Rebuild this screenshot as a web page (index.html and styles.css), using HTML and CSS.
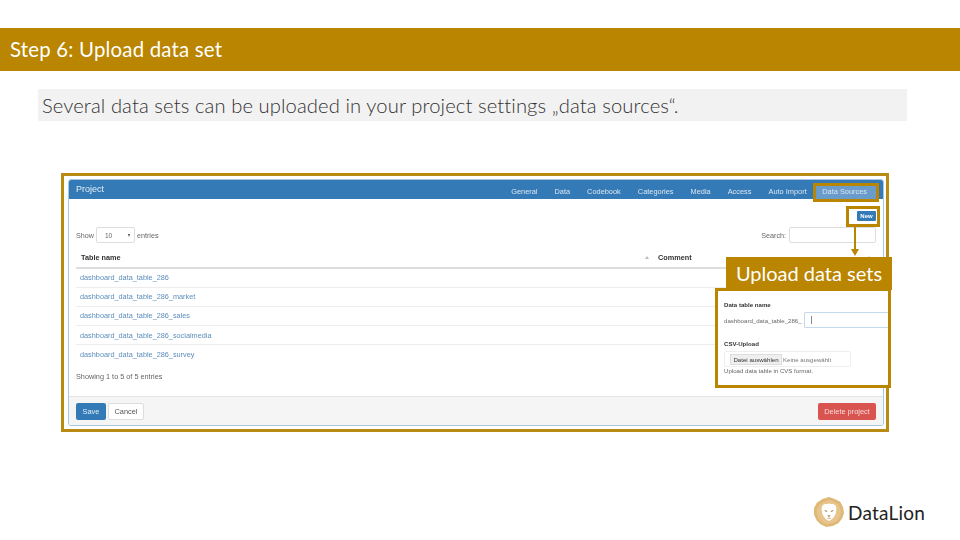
FILE: index.html
```html
<!DOCTYPE html>
<html lang="en">
<head>
    <meta charset="UTF-8">
    <title>Step 6: Upload data set</title>
    <link rel="stylesheet" href="styles.css">
</head>
<body>
<div class="slide">
    <div class="title-bar">Step 6: Upload data set</div>
    <div class="intro">Several data sets can be uploaded in your project settings „data sources“.</div>

    <div class="shot-frame">
        <div class="panel">
            <div class="panel-head">
                <span class="panel-title">Project</span>
                <div class="tabs">
                    <span class="tab">General</span>
                    <span class="tab">Data</span>
                    <span class="tab">Codebook</span>
                    <span class="tab">Categories</span>
                    <span class="tab">Media</span>
                    <span class="tab">Access</span>
                    <span class="tab">Auto Import</span>
                    <span class="tab active">Data Sources</span>
                </div>
            </div>
            <div class="panel-body">
                <div class="new-row"><span class="btn-new">New</span></div>
                <div class="controls">
                    <div class="show">
                        Show
                        <span class="select"><span>10</span><span class="select-arrow"></span></span>
                        entries
                    </div>
                    <div class="search">Search: <span class="search-box"></span></div>
                </div>
                <table class="data-table">
                    <thead>
                        <tr>
                            <th class="col-name"><div class="th-inner">Table name <span class="sort"></span></div></th>
                            <th class="col-comment"><div class="th-inner">Comment <span class="sort"></span></div></th>
                        </tr>
                    </thead>
                    <tbody>
                        <tr><td><a>dashboard_data_table_286</a></td><td></td></tr>
                        <tr><td><a>dashboard_data_table_286_market</a></td><td></td></tr>
                        <tr><td><a>dashboard_data_table_286_sales</a></td><td></td></tr>
                        <tr><td><a>dashboard_data_table_286_socialmedia</a></td><td></td></tr>
                        <tr><td><a>dashboard_data_table_286_survey</a></td><td></td></tr>
                    </tbody>
                </table>
                <div class="info">Showing 1 to 5 of 5 entries</div>
            </div>
            <div class="panel-foot">
                <span class="btn btn-save">Save</span>
                <span class="btn btn-cancel">Cancel</span>
                <span class="btn btn-delete">Delete project</span>
            </div>
        </div>
    </div>

    <div class="logo-row">
        <svg class="logo-mark" width="30" height="30" viewBox="0 0 32 32">
            <polygon points="16,0 22,2 28,5 31,11 32,17 30,23 26,28 20,31 13,32 7,29 3,25 0,19 0,12 3,6 9,2" fill="#dfb877"/>
            <polygon points="16,3 21,5 26,8 28,12 29,17 27,22 24,26 19,28 13,29 8,26 5,23 3,18 3,13 6,8 11,5" fill="#e6c48c"/>
            <path d="M9 9 C11 7 13 8 16 7 C19 8 21 7 23 9 C24 11 24 13 23.5 16 C23 20 20 24 16 25.5 C12 24 9 20 8.500 16 C8 13 8 11 9 9 Z" fill="#fff"/>
            <path d="M11.500 14.500 L14 15.500 M20.500 14.500 L18 15.500" stroke="#a98550" stroke-width="1.100"/>
            <path d="M14.200 19.500 L17.800 19.500 L16 21.500 Z" fill="#a98550"/>
            <path d="M16 21.500 L16 23 M14 23 L18 23" stroke="#cfa868" stroke-width="0.700"/>
        </svg>
        <span class="logo-text">DataLion</span>
    </div>

    <!-- call-outs lying over the screenshot -->
    <div class="mark mark-tab"></div>
    <div class="mark mark-new"></div>
    <div class="arrow"></div>
    <div class="callout-label">Upload data sets</div>
    <div class="callout">
        <div class="callout-inner">
            <div class="field-label">Data table name</div>
            <div class="name-row">
                <span>dashboard_data_table_286_</span>
                <span class="name-input"><span class="caret"></span></span>
            </div>
            <div class="field-label csv-label">CSV-Upload</div>
            <div class="file-box"><span class="file-btn">Datei auswählen</span> Keine ausgewählt</div>
            <div class="help">Upload data table in CVS format.</div>
        </div>
    </div>
</div>
</body>
</html>
```

FILE: styles.css
```css
* {
    margin: 0;
    padding: 0;
    box-sizing: border-box;
}
html, body {
    width: 960px;
    height: 540px;
    overflow: hidden;
    background: white;
}
.slide {
    position: relative;
    width: 960px;
    height: 540px;
    padding-top: 28px;
    font-family: "Liberation Sans", Arial, sans-serif;
    color: #555;
}
.title-bar {
    height: 43px;
    padding-left: 10px;
    background: #ba8500;
    color: #fff;
    font-family: Lato, sans-serif;
    font-size: 20.4px;
    line-height: 42px;
    letter-spacing: 0.2px;
}
.intro {
    width: 869px;
    height: 32px;
    margin: 18px 0 0 38px;
    padding-left: 4px;
    background: #f2f2f2;
    color: #333;
    font-family: Lato, sans-serif;
    font-weight: 300;
    font-size: 20.2px;
    line-height: 32px;
    letter-spacing: 0.1px;
}

/* screenshot of the project settings */
.shot-frame {
    width: 828px;
    height: 259px;
    margin: 52px 0 0 61px;
    padding: 3px 2px 3px 4px;
    border: 3px solid #ba8b12;
}
.panel {
    display: flex;
    flex-direction: column;
    height: 100%;
    border: 1px solid #a9c6e2;
    border-radius: 3px;
    overflow: hidden;
    filter: blur(0.3px);
}
.panel-head {
    display: flex;
    justify-content: space-between;
    align-items: flex-end;
    height: 19px;
    padding-left: 7px;
    background: #337ab7;
    color: #e4edf5;
}
.panel-title {
    align-self: center;
    margin-top: -1px;
    font-size: 9px;
}
.tabs {
    display: flex;
    font-size: 7.4px;
    margin-right: 7px;
}
.tab {
    padding: 0 8.5px;
    height: 13px;
    line-height: 11px;
    color: #dbe6f0;
}
.tab.active {
    padding: 0 9px 0 7px;
    background: #699bcb;
}
.panel-body {
    flex: 1;
    padding: 0 7px;
}
.new-row {
    display: flex;
    justify-content: flex-end;
    margin-top: 12px;
}
.btn-new {
    width: 19px;
    height: 10px;
    background: #337ab7;
    border-radius: 1px;
    color: #fff;
    font-size: 6px;
    font-weight: bold;
    line-height: 10px;
    text-align: center;
}
.controls {
    display: flex;
    justify-content: space-between;
    align-items: center;
    margin-top: 6px;
    font-size: 7.2px;
    color: #666;
}
.show {
    display: flex;
    align-items: center;
    gap: 2px;
}
.search {
    display: flex;
    align-items: center;
    gap: 3px;
}
.select {
    display: flex;
    justify-content: space-between;
    align-items: center;
    width: 39px;
    height: 16px;
    padding: 0 4px 0 8px;
    border: 1px solid #ddd;
    border-radius: 2px;
    font-size: 6.5px;
}
.select-arrow {
    border-left: 1.5px solid transparent;
    border-right: 1.5px solid transparent;
    border-top: 3px solid #444;
}
.search-box {
    width: 87px;
    height: 16px;
    border: 1px solid #ddd;
    border-radius: 2px;
}
.data-table {
    width: 800px;
    margin-top: 3px;
    border-collapse: collapse;
    table-layout: fixed;
    font-size: 7.3px;
}
.data-table th {
    height: 22px;
    padding: 1px 5px 0;
    border-bottom: 2px solid #ddd;
    color: #333;
    text-align: left;
    font-size: 7.3px;
}
.data-table .col-name {
    width: 576px;
    padding-right: 3px;
}
.data-table .col-comment {
    padding-left: 6px;
}
.th-inner {
    display: flex;
    justify-content: space-between;
    align-items: center;
}
.sort {
    width: 0;
    height: 0;
    border-left: 2.5px solid transparent;
    border-right: 2.5px solid transparent;
    border-bottom: 3px solid #bbb;
}
.data-table td {
    height: 19.2px;
    padding: 0 4px;
    border-bottom: 1px solid #ececec;
}
.data-table tbody tr:last-child td {
    border-bottom: none;
}
.data-table a {
    color: #5c8ebc;
}
.info {
    margin-top: 8px;
    font-size: 7.3px;
    color: #666;
}
.panel-foot {
    display: flex;
    align-items: center;
    gap: 2px;
    height: 29px;
    padding: 0 7px;
    background: #f5f5f5;
    border-top: 1px solid #e4e4e4;
}
.btn {
    height: 17px;
    border-radius: 2px;
    font-size: 7.4px;
    line-height: 17px;
    text-align: center;
}
.btn-save {
    width: 30px;
    background: #337ab7;
    color: #e6eff7;
}
.btn-cancel {
    width: 36px;
    background: #fff;
    border: 1px solid #ddd;
    line-height: 15px;
    color: #555;
}
.btn-delete {
    width: 58px;
    margin-left: auto;
    background: #d9534f;
    color: #f6dcdb;
}

.logo-row {
    display: flex;
    justify-content: flex-end;
    align-items: center;
    gap: 4px;
    margin-top: 65px;
    padding-right: 35px;
}
.logo-text {
    font-family: Lato, sans-serif;
    font-size: 19px;
    color: #222;
    letter-spacing: 0.2px;
}

/* overlays */
.mark {
    position: absolute;
    border: 3px solid #ba8500;
}
.mark-tab {
    left: 813px;
    top: 183px;
    width: 66px;
    height: 19px;
}
.mark-new {
    left: 846px;
    top: 206px;
    width: 34px;
    height: 21px;
}
.arrow {
    position: absolute;
    left: 854px;
    top: 227px;
    width: 2px;
    height: 22px;
    background: #ba8500;
}
.arrow::after {
    content: "";
    position: absolute;
    left: -3px;
    bottom: -7px;
    border-left: 4px solid transparent;
    border-right: 4px solid transparent;
    border-top: 7px solid #ba8500;
}
.callout-label {
    position: absolute;
    left: 726px;
    top: 257px;
    width: 166px;
    height: 33px;
    background: #ba8500;
    color: #fff;
    font-family: Lato, sans-serif;
    font-size: 20px;
    line-height: 32px;
    text-align: center;
}
.callout {
    position: absolute;
    left: 715px;
    top: 288px;
    width: 176px;
    height: 100px;
    background: #fff;
    border: 3px solid #ba8500;
    overflow: hidden;
}
.callout-inner {
    padding: 10px 0 0 6px;
    font-size: 6.1px;
    filter: blur(0.3px);
}
.field-label {
    font-weight: bold;
    color: #333;
    line-height: 8px;
}
.name-row {
    display: flex;
    align-items: center;
    gap: 2px;
    margin-top: 3px;
    color: #666;
}
.name-input {
    display: flex;
    align-items: center;
    flex: 1;
    height: 16px;
    padding-left: 6px;
    border: 1px solid #c5d9ec;
    border-right: none;
    border-radius: 2px 0 0 2px;
}
.caret {
    width: 1px;
    height: 8px;
    background: #888;
}
.csv-label {
    margin-top: 12px;
}
.file-box {
    display: flex;
    align-items: center;
    gap: 1px;
    width: 127px;
    height: 16px;
    margin-top: 3px;
    padding-left: 5px;
    border: 1px solid #eee;
    border-radius: 2px;
    color: #777;
}
.file-btn {
    width: 52px;
    height: 11px;
    background: #efefef;
    border: 1px solid #ddd;
    color: #333;
    line-height: 9px;
    text-align: center;
}
.help {
    color: #666;
}
```
